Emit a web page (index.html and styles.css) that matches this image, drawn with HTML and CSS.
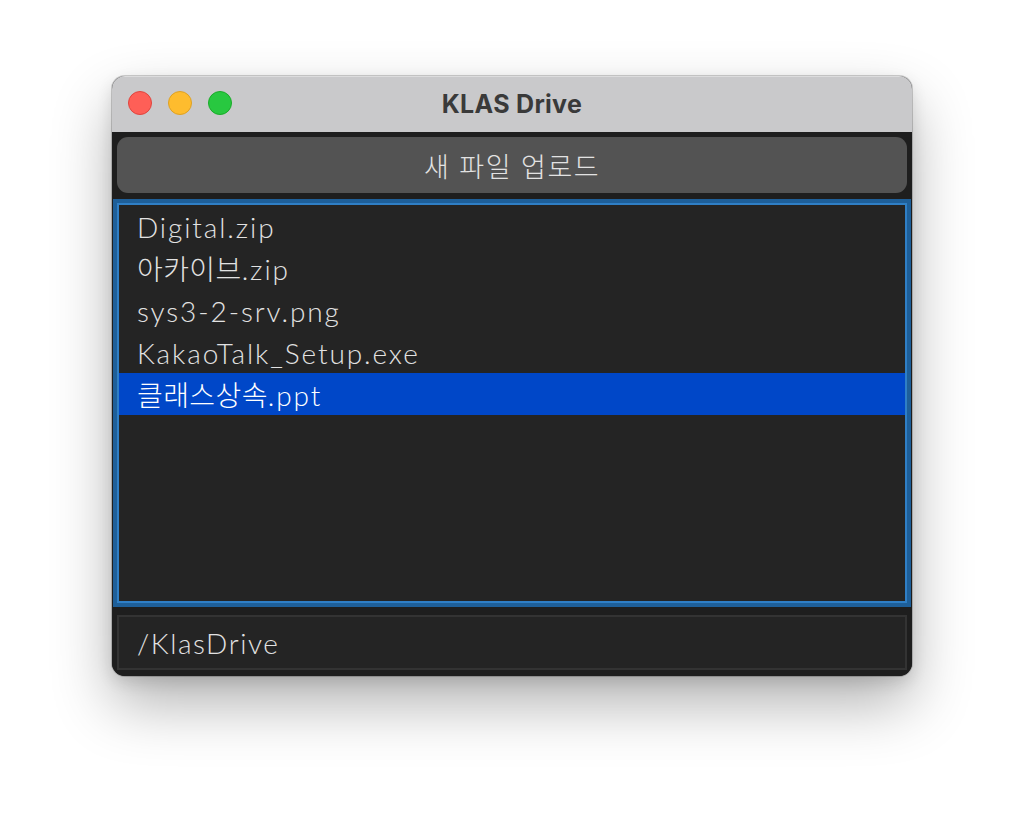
FILE: index.html
```html
<!DOCTYPE html>
<html lang="ko">
<head>
<meta charset="utf-8">
<title>KLAS Drive</title>
<link rel="stylesheet" href="styles.css">
</head>
<body>
<div class="window">
  <div class="titlebar">
    <div class="lights">
      <span class="light red"></span>
      <span class="light yellow"></span>
      <span class="light green"></span>
    </div>
    <div class="title">KLAS Drive</div>
  </div>
  <div class="content">
    <button class="upload">새 파일 업로드</button>
    <ul class="files">
      <li class="file">Digital.zip</li>
      <li class="file"><span class="ko">아카이브</span>.zip</li>
      <li class="file">sys3-2-srv.png</li>
      <li class="file">KakaoTalk_Setup.exe</li>
      <li class="file selected"><span class="ko">클래스상속</span>.ppt</li>
    </ul>
    <div class="path">/KlasDrive</div>
  </div>
</div>
</body>
</html>
```
FILE: styles.css
```css
html {
  height: 100%;
  background: #ffffff;
}
body {
  margin: 0;
  padding: 76px 0 0 0;
  min-height: 100%;
  box-sizing: border-box;
  background: #ffffff;
}
.window {
  width: 800px;
  height: 600px;
  margin: 0 auto;
  border-radius: 13px;
  overflow: hidden;
  display: flex;
  flex-direction: column;
  background: #1c1c1c;
  box-shadow: 0 0 0 1px rgba(0,0,0,0.18), 0 28px 60px rgba(0,0,0,0.30), 0 6px 16px rgba(0,0,0,0.12);
}
.titlebar {
  height: 56px;
  flex: 0 0 56px;
  background: #c9c9cb;
  position: relative;
  display: flex;
  align-items: center;
  justify-content: center;
  box-shadow: inset 0 1px 0 rgba(255,255,255,0.35);
}
.lights {
  position: absolute;
  left: 16px;
  top: 15px;
  display: flex;
  gap: 16px;
}
.light {
  width: 22px;
  height: 22px;
  border-radius: 50%;
  display: block;
}
.red { background: #fe5f57; border: 1px solid #e0443e; }
.yellow { background: #febc2e; border: 1px solid #dea123; }
.green { background: #28c840; border: 1px solid #1aab29; }
.title {
  font-family: "Inter", "Liberation Sans", sans-serif;
  font-weight: 700;
  font-size: 25px;
  color: #3a3a3a;
  letter-spacing: 0.3px;
}
.content {
  flex: 1;
  display: flex;
  flex-direction: column;
  padding: 5px 5px 6px 5px;
  background: #1e1e1e;
}
.upload {
  height: 56px;
  flex: 0 0 56px;
  border: none;
  border-radius: 11px;
  background: #535353;
  color: #e2e2e2;
  font-family: "Noto Sans CJK KR", sans-serif;
  font-weight: 300;
  font-size: 27px;
  letter-spacing: 1.5px;
  padding: 0;
  margin: 0;
}
.files {
  list-style: none;
  margin: 10px 0 0 0;
  padding: 0;
  height: 400px;
  flex: 0 0 400px;
  box-sizing: border-box;
  border: 2px solid #2f7fc6;
  box-shadow: 0 0 0 4px #1e5f99;
  background: #242424;
}
.file {
  height: 42px;
  line-height: 44px;
  padding-left: 18px;
  font-family: "Lato", "Noto Sans CJK KR", sans-serif;
  font-weight: 300;
  font-size: 28px;
  letter-spacing: 1.9px;
  color: #e2e2e2;
  white-space: nowrap;
}
.ko {
  letter-spacing: 0.4px;
}
.file.selected {
  background: #0047c8;
  color: #ffffff;
}
.path {
  margin-top: 12px;
  height: 55px;
  flex: 0 0 55px;
  box-sizing: border-box;
  border: 2px solid #333333;
  background: #242424;
  display: flex;
  align-items: center;
  padding-left: 18px;
  font-family: "Lato", "Noto Sans CJK KR", sans-serif;
  font-weight: 300;
  font-size: 28px;
  letter-spacing: 1.6px;
  color: #e2e2e2;
}
```
